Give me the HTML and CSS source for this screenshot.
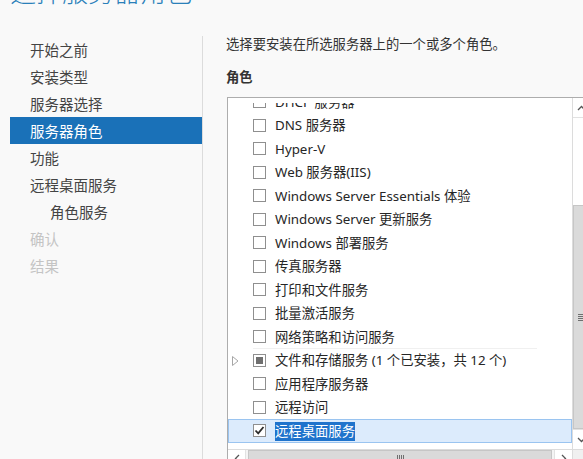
FILE: index.html
```html
<!DOCTYPE html>
<html lang="zh-CN">
<head>
  <meta charset="UTF-8" />
  <title>选择服务器角色</title>
  <link rel="stylesheet" href="styles.css">
</head>
<body>
  <div class="header">
    <h1>选择服务器角色</h1>
  </div>

  <div class="main">
    <ul class="steps">
      <li>开始之前</li>
      <li>安装类型</li>
      <li>服务器选择</li>
      <li class="active">服务器角色</li>
      <li>功能</li>
      <li>远程桌面服务</li>
      <li class="sub">角色服务</li>
      <li class="disabled">确认</li>
      <li class="disabled">结果</li>
    </ul>

    <div class="content">
      <p class="intro">选择要安装在所选服务器上的一个或多个角色。</p>
      <h3>角色</h3>

      <div class="listbox">
        <div class="items">
          <div class="rows">
            <div class="row"><span class="box"></span><span class="label">DHCP 服务器</span></div>
            <div class="row"><span class="box"></span><span class="label">DNS 服务器</span></div>
            <div class="row"><span class="box"></span><span class="label">Hyper-V</span></div>
            <div class="row"><span class="box"></span><span class="label">Web 服务器(IIS)</span></div>
            <div class="row"><span class="box"></span><span class="label">Windows Server Essentials 体验</span></div>
            <div class="row"><span class="box"></span><span class="label">Windows Server 更新服务</span></div>
            <div class="row"><span class="box"></span><span class="label">Windows 部署服务</span></div>
            <div class="row"><span class="box"></span><span class="label">传真服务器</span></div>
            <div class="row"><span class="box"></span><span class="label">打印和文件服务</span></div>
            <div class="row"><span class="box"></span><span class="label">批量激活服务</span></div>
            <div class="row sep"><span class="box"></span><span class="label">网络策略和访问服务</span></div>
            <div class="row">
              <svg class="expander" width="7" height="10" viewBox="0 0 7 10"><path d="M0.5 0.5 L6 5 L0.5 9.5 Z" fill="none" stroke="#a6a6a6" stroke-width="1"/></svg>
              <span class="box partial"><span></span></span><span class="label">文件和存储服务 (1 个已安装，共 12 个)</span>
            </div>
            <div class="row"><span class="box"></span><span class="label">应用程序服务器</span></div>
            <div class="row"><span class="box"></span><span class="label">远程访问</span></div>
            <div class="row selected">
              <span class="box"><svg width="11" height="11" viewBox="0 0 11 11"><path d="M1.5 5.5 L4.2 8.3 L9.5 2" fill="none" stroke="#2b2b2b" stroke-width="1.8"/></svg></span>
              <span class="label"><span class="hl">远程桌面服务</span></span>
            </div>
          </div>
        </div>

        <div class="vscroll">
          <div class="btn"><svg width="9" height="6" viewBox="0 0 9 6"><path d="M1 5 L4.5 1.5 L8 5" fill="none" stroke="#555" stroke-width="1.3"/></svg></div>
          <div class="track"></div>
          <div class="thumb"><span class="grip"></span></div>
          <div class="btn"><svg width="9" height="6" viewBox="0 0 9 6"><path d="M1 1 L4.5 4.5 L8 1" fill="none" stroke="#555" stroke-width="1.3"/></svg></div>
        </div>

        <div class="hscroll">
          <div class="btn"><svg width="6" height="9" viewBox="0 0 6 9"><path d="M5 1 L1.5 4.5 L5 8" fill="none" stroke="#555" stroke-width="1.3"/></svg></div>
          <div class="thumb"><span class="grip"></span></div>
          <div class="btn"><svg width="6" height="9" viewBox="0 0 6 9"><path d="M1 1 L4.5 4.5 L1 8" fill="none" stroke="#555" stroke-width="1.3"/></svg></div>
        </div>
        <div class="corner"></div>
      </div>
    </div>
  </div>
</body>
</html>
```

FILE: styles.css
```css
body {
  margin: 0;
  background: #f9f9f9;
  font-family: "Noto Sans", "Noto Sans CJK SC", sans-serif;
  color: #333;
  overflow: hidden;
  width: 583px;
  height: 459px;
}

.header {
  height: 36px;
  overflow: hidden;
}
.header h1 {
  margin: -27px 0 0 10px;
  font-family: "Noto Sans CJK SC", sans-serif;
  font-weight: 300;
  font-size: 26px;
  line-height: 36px;
  color: #2a80b9;
}

.main {
  display: flex;
  height: 423px;
}

/* wizard steps */
.steps {
  flex: none;
  list-style: none;
  margin: 0 0 0 10px;
  padding: 0;
  width: 192px;
  border-right: 1px solid #dcdcdc;
  font-family: "Noto Sans CJK SC", sans-serif;
  font-size: 14.5px;
}
.steps li {
  height: 27px;
  line-height: 27px;
  padding-left: 20px;
  color: #444;
}
.steps li.sub { padding-left: 40px; }
.steps li.active { background: #1a71b8; color: #fff; }
.steps li.disabled { color: #c4c4c4; }

/* right pane */
.content {
  flex: none;
  padding-left: 23px;
  font-size: 13.33px;
}
.intro {
  margin: 0;
  height: 16px;
  line-height: 16px;
  font-family: "Noto Sans CJK SC", sans-serif;
}
.content h3 {
  margin: 16px 0 0;
  height: 18px;
  line-height: 18px;
  font-size: 13.33px;
  font-weight: bold;
  font-family: "Noto Sans CJK SC", sans-serif;
}
.listbox {
  margin-top: 11px;
  margin-left: 1px;
  width: 362px;
  border: 1px solid #adadad;
  border-right: 0;
  background: #fff;
  display: grid;
  grid-template-columns: 344px 17px;
  grid-template-rows: 351px 17px;
}

.items {
  overflow: hidden;
  margin-top: 5px;
}
.rows {
  margin-top: -13px;
}
.row {
  position: relative;
  height: 23.5px;
  display: flex;
  align-items: center;
  padding-left: 25px;
  box-sizing: border-box;
  color: #262626;
  white-space: nowrap;
}
.row.sep::after {
  content: "";
  position: absolute;
  left: 25px;
  right: 35px;
  bottom: 0;
  border-bottom: 1px solid #f0f0f0;
}
.row .expander {
  position: absolute;
  left: 4px;
  top: 7px;
}
.box {
  width: 13px;
  height: 13px;
  box-sizing: border-box;
  border: 1px solid #8f8f8f;
  background: #fff;
  margin-right: 9px;
  display: flex;
  align-items: center;
  justify-content: center;
  flex: none;
}
.box.partial span {
  width: 7px;
  height: 7px;
  background: #6f6f6f;
}
.label { line-height: 18px; }
.row.selected {
  background: #dcebfc;
  border: 1px solid #9ac4f0;
  padding-left: 24px;
}
.hl {
  background: #1f73cc;
  color: #fff;
  padding: 0 0 1px;
}

/* scrollbars */
.vscroll {
  display: flex;
  flex-direction: column;
  border-left: 1px solid #dcdcdc;
  background: #f4f4f4;
}
.vscroll .btn {
  height: 19px;
  display: flex;
  align-items: center;
  justify-content: center;
  background: #fff;
  border-bottom: 1px solid #e2e2e2;
}
.vscroll .btn:last-child {
  border-top: 1px solid #e2e2e2;
  border-bottom: 0;
  margin-top: auto;
}
.vscroll .track {
  height: 87px;
  background: #fff;
}
.vscroll .thumb {
  height: 224px;
  background: #dadada;
  border: 1px solid #c6c6c6;
  box-sizing: border-box;
  display: flex;
  align-items: center;
  justify-content: center;
}
.vscroll .grip {
  width: 7px;
  height: 7px;
  background: repeating-linear-gradient(#6f6f6f 0 1px, transparent 1px 2px);
}

.hscroll {
  display: flex;
  gap: 2px;
  border-top: 1px solid #dcdcdc;
  background: #f4f4f4;
}
.hscroll .btn {
  width: 17px;
  display: flex;
  align-items: center;
  justify-content: center;
  background: #fff;
  border-right: 1px solid #e2e2e2;
}
.hscroll .btn:last-child {
  border-right: 0;
  border-left: 1px solid #e2e2e2;
}
.hscroll .thumb {
  width: 304px;
  background: #dadada;
  border: 1px solid #c6c6c6;
  box-sizing: border-box;
  display: flex;
  align-items: center;
  justify-content: center;
}
.hscroll .grip {
  width: 7px;
  height: 7px;
  background: repeating-linear-gradient(90deg, #6f6f6f 0 1px, transparent 1px 2px);
}
.corner {
  background: #f0f0f0;
  border-left: 1px solid #dcdcdc;
  border-top: 1px solid #dcdcdc;
}
```
